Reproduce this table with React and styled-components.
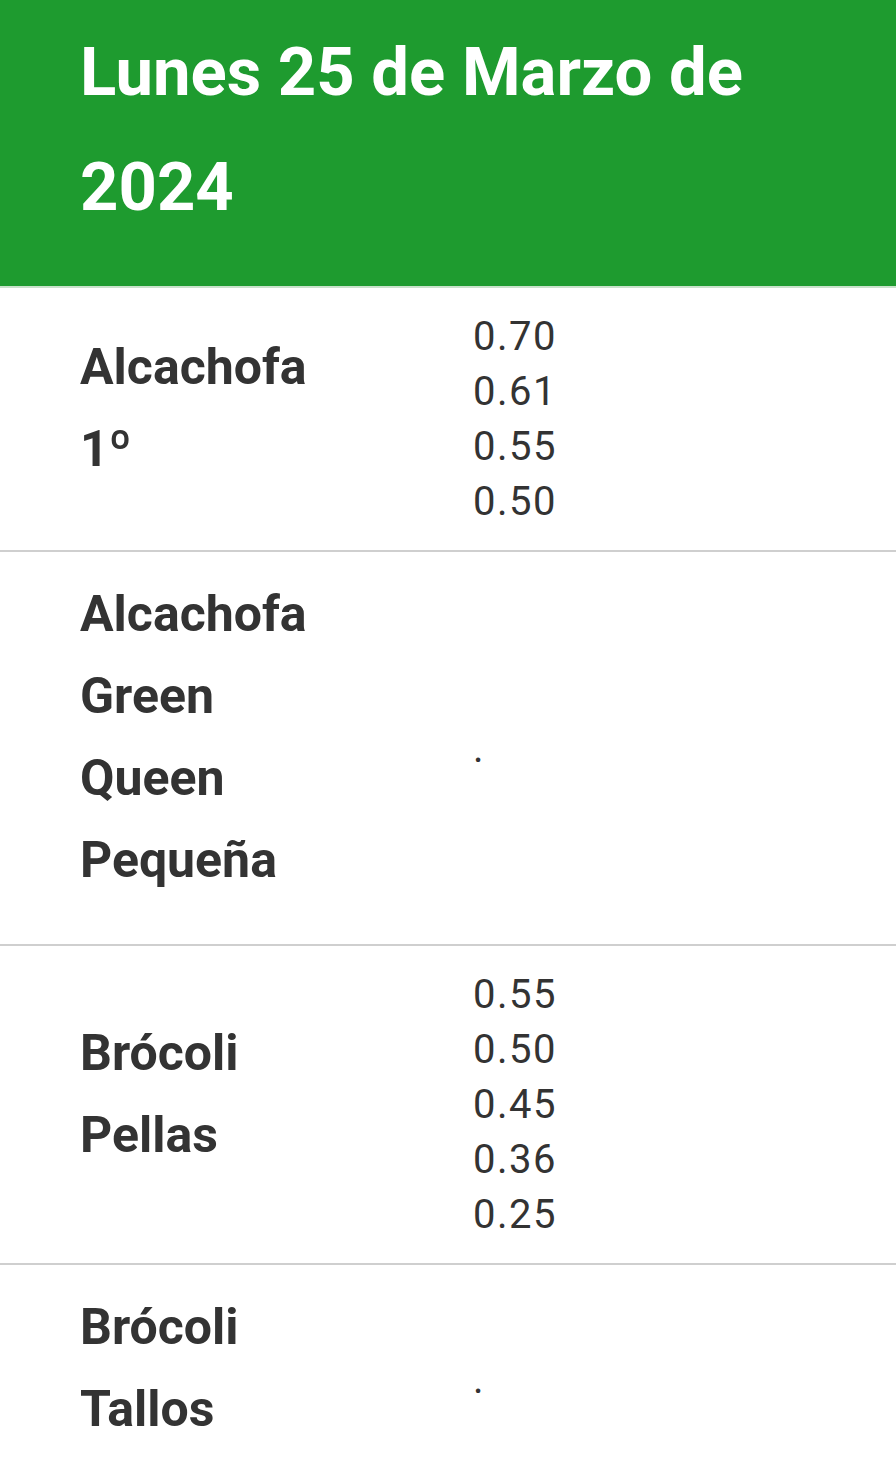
import React from "react";
import styled, { createGlobalStyle } from "styled-components";

const GlobalStyle = createGlobalStyle`
  html, body {
    margin: 0;
    padding: 0;
    background: #ffffff;
  }
  body {
    font-family: "Roboto", "Noto Sans", sans-serif;
    color: #333333;
  }
`;

const Header = styled.header`
  background: #1e9b2f;
  padding: 15px 80px 41px;
  border-bottom: 2px solid #c9e2cb;
`;

const Title = styled.h1`
  margin: 0;
  color: #ffffff;
  font-size: 67px;
  font-weight: 700;
  line-height: 115px;
`;

const Row = styled.div`
  display: grid;
  grid-template-columns: 393px 1fr;
  align-items: center;
  padding: 21px 0 21px 80px;
  border-bottom: 2px solid #cfcfcf;

  &:last-child {
    border-bottom: none;
  }
`;

const Label = styled.p`
  margin: 0 0 22px;
  font-size: 50px;
  font-weight: 700;
  line-height: 82px;
  color: #333333;
`;

const Values = styled.div`
  display: flex;
  flex-direction: column;
  font-size: 40px;
  line-height: 55px;
  letter-spacing: 1.5px;
  color: #333333;
`;

const products = [
  { name: ["Alcachofa", "1º"], prices: ["0.70", "0.61", "0.55", "0.50"] },
  { name: ["Alcachofa", "Green", "Queen", "Pequeña"], prices: [] },
  { name: ["Brócoli", "Pellas"], prices: ["0.55", "0.50", "0.45", "0.36", "0.25"] },
  { name: ["Brócoli", "Tallos"], prices: [] },
];

export default function App() {
  return (
    <>
      <GlobalStyle />
      <Header>
        <Title>Lunes 25 de Marzo de 2024</Title>
      </Header>
      {products.map((product, index) => (
        <Row key={index}>
          <Label>
            {product.name.map((word, i) => (
              <React.Fragment key={i}>
                {i > 0 && <br />}
                {word}
              </React.Fragment>
            ))}
          </Label>
          <Values>
            {product.prices.length > 0
              ? product.prices.map((price, i) => <span key={i}>{price}</span>)
              : <span>.</span>}
          </Values>
        </Row>
      ))}
    </>
  );
}
